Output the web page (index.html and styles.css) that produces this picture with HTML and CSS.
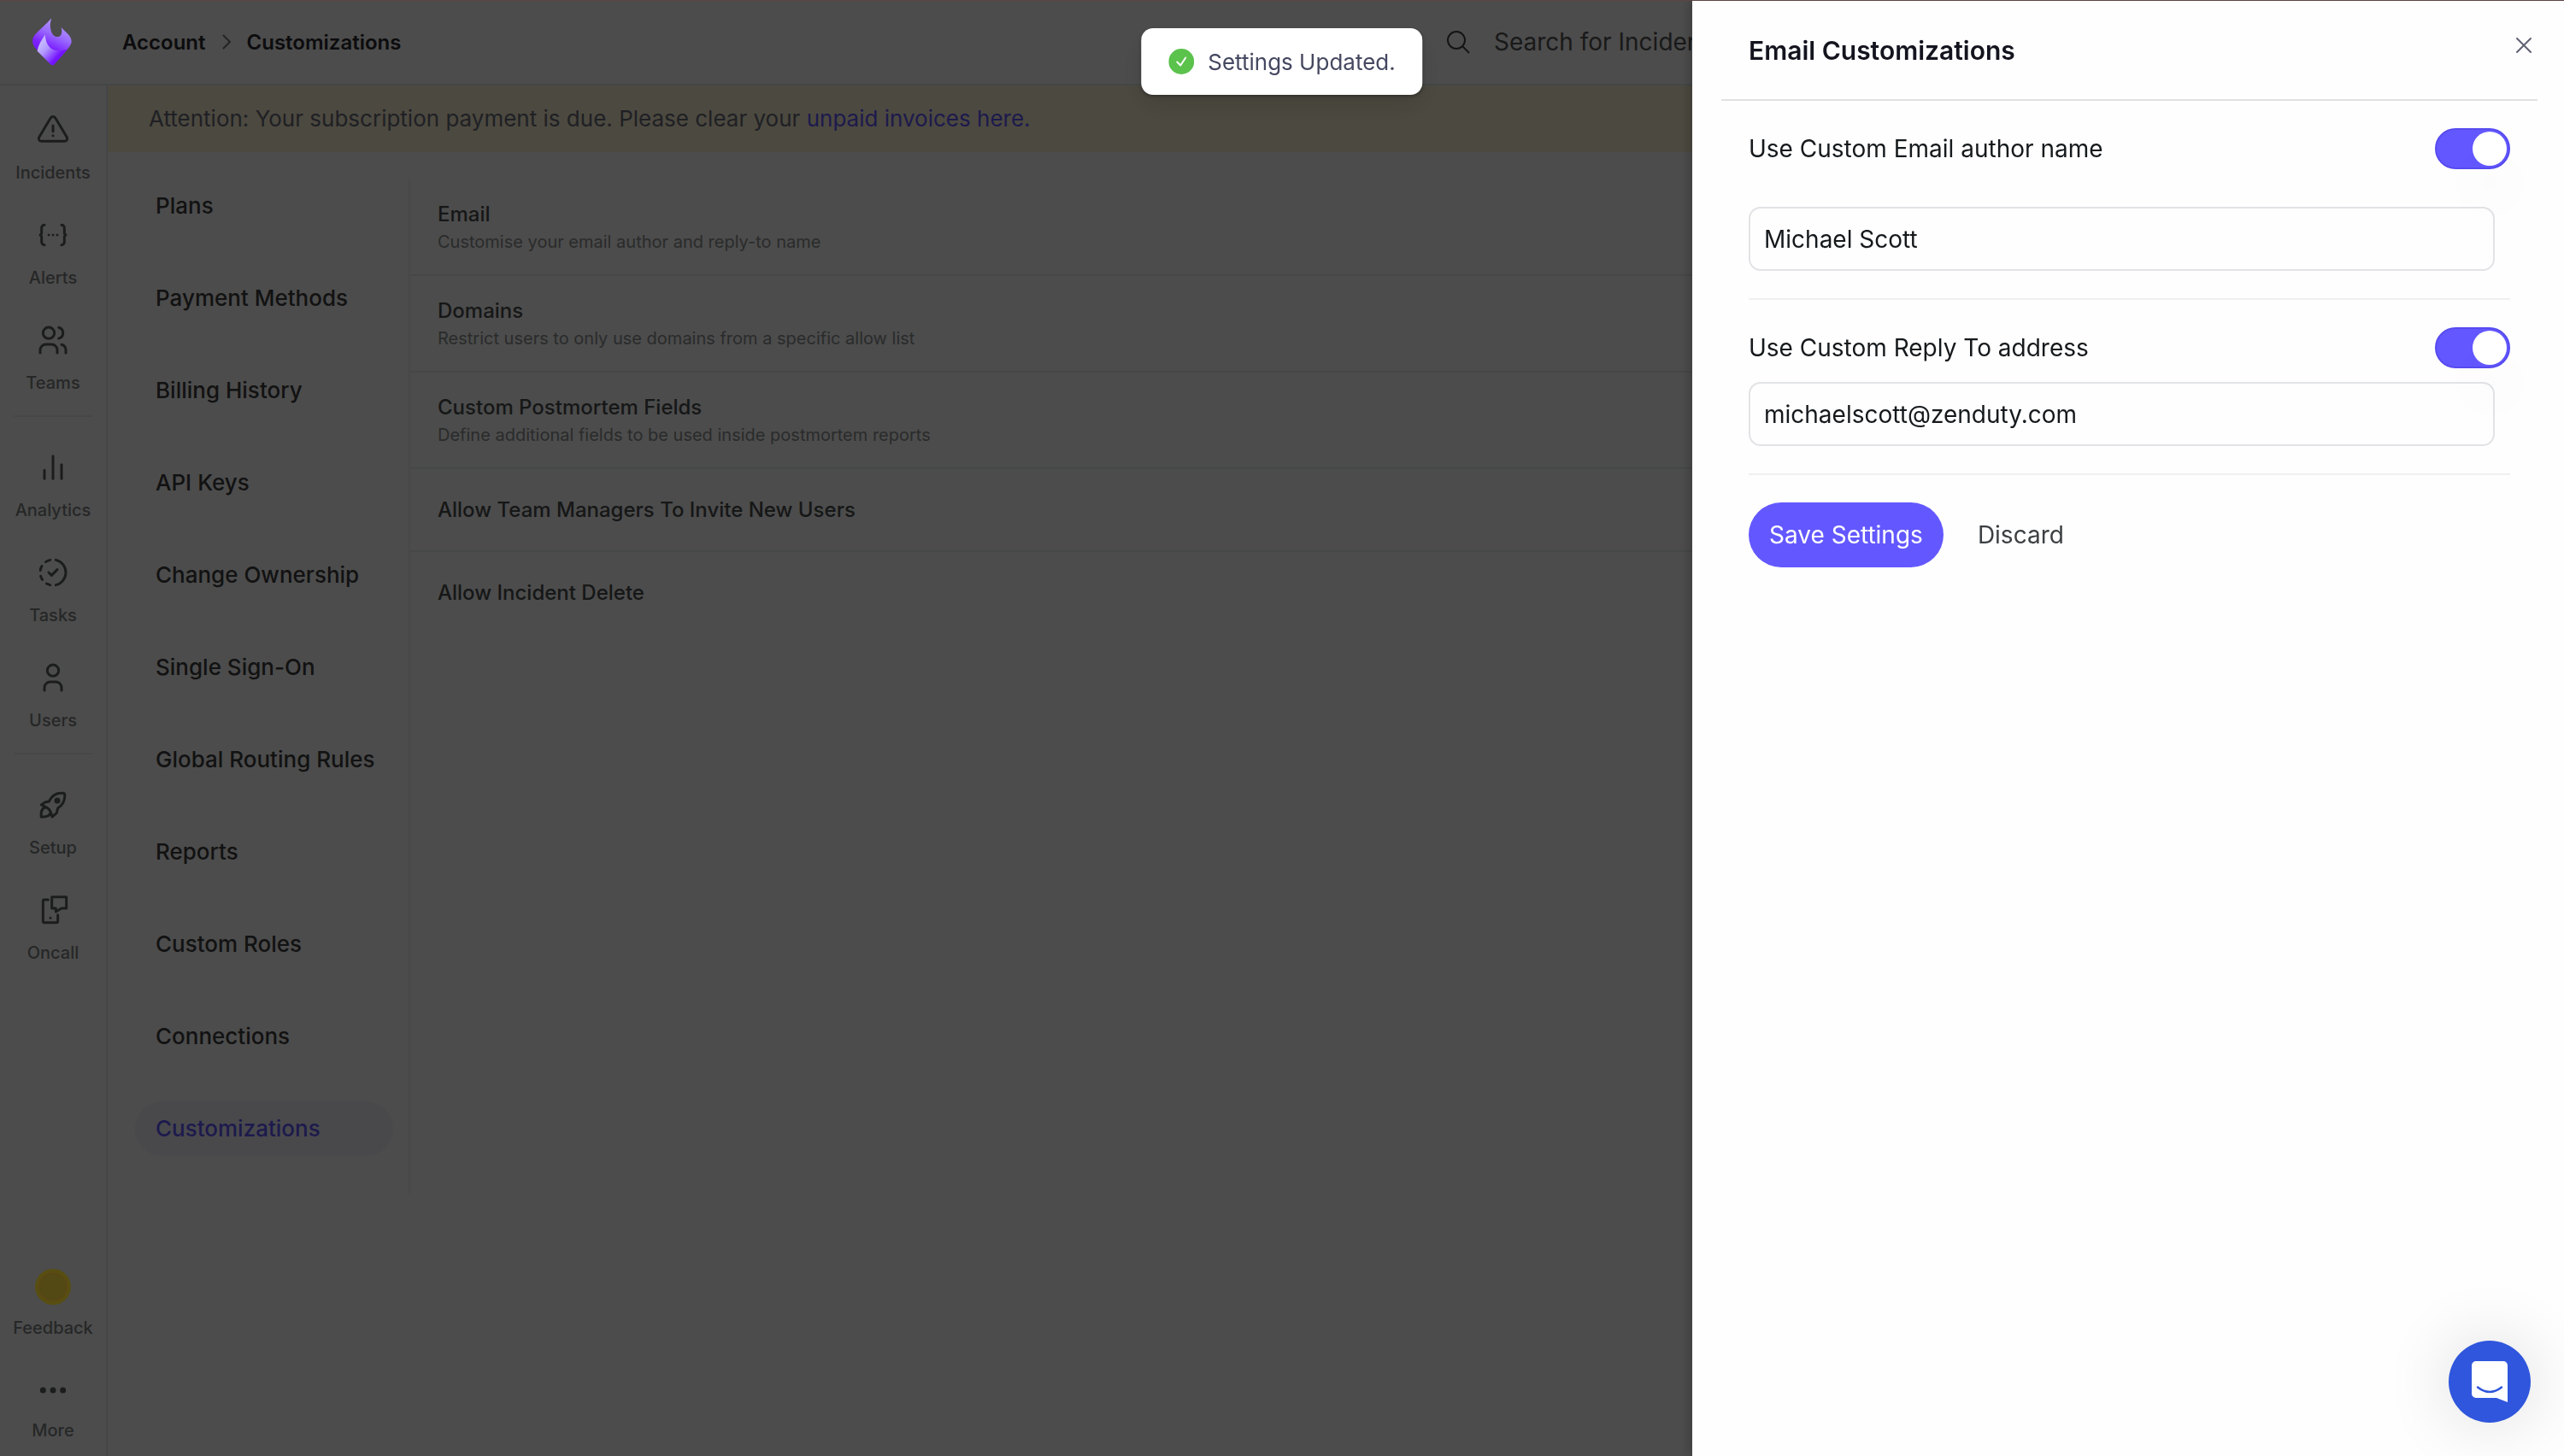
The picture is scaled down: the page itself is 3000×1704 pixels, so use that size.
FILE: index.html
```html
<!DOCTYPE html>
<html lang="en">
<head>
  <meta charset="UTF-8">
  <meta name="viewport" content="width=device-width, initial-scale=1.0">
  <title>Account - Customizations</title>
  <link rel="stylesheet" href="styles.css">
</head>
<body>
  <!-- Top Bar -->
  <header class="topbar">
    <a href="#" class="logo" aria-label="Home">
      <svg viewBox="110 60 146 174" width="48" height="58">
        <defs>
          <linearGradient id="flameOuter" x1="0.7" y1="0" x2="0.3" y2="1">
            <stop offset="0" stop-color="#b9a4ff"/>
            <stop offset="0.35" stop-color="#9a6cff"/>
            <stop offset="0.62" stop-color="#7c22ff"/>
            <stop offset="1" stop-color="#6a10f5"/>
          </linearGradient>
          <linearGradient id="flameInner" x1="0.1" y1="0.35" x2="0.6" y2="0.8">
            <stop offset="0" stop-color="#c3b5ff"/>
            <stop offset="0.35" stop-color="#b199ff"/>
            <stop offset="1" stop-color="#7413ff"/>
          </linearGradient>
        </defs>
        <path fill="url(#flameOuter)" d="M180 63C178 76 174 84 178 103C181 119 190 129 201 129C216 129 221 113 215 95C229 109 240 118 246 127C254 139 254 151 246 162C232 181 209 206 191 226Q184 234 177 226C160 208 138 188 124 170C110 152 110 136 122 121C138 102 163 84 180 63Z"/>
        <path fill="url(#flameInner)" d="M158 122C144 142 134 158 130 180L177 226Q184 234 191 226L238 173C222 181 196 180 182 172C168 163 160 148 158 122Z"/>
      </svg>
    </a>
    <nav class="breadcrumb">
      <a href="#">Account</a>
      <svg viewBox="0 0 12 20" width="12" height="20"><path d="M2 2l8 8-8 8" fill="none" stroke="#777" stroke-width="2"/></svg>
      <a href="#">Customizations</a>
    </nav>
    <div class="search">
      <svg viewBox="0 0 28 28" width="28" height="28" fill="none" stroke="#444" stroke-width="2"><circle cx="12" cy="12" r="10"/><path d="M19 19l8 8"/></svg>
      <input type="text" placeholder="Search for Incidents" aria-label="Search">
    </div>
  </header>

  <div class="layout">
    <!-- Sidebar -->
    <aside class="sidebar">
      <div class="side-group">
        <a href="#" class="side-item">
          <svg class="icon" viewBox="0 0 24 24"><path d="M12 9v4M10.363 3.591l-8.106 13.534a1.914 1.914 0 0 0 1.636 2.871h16.214a1.914 1.914 0 0 0 1.636-2.87l-8.106-13.536a1.914 1.914 0 0 0-3.274 0zM12 16h.01"/></svg>
          <span>Incidents</span>
        </a>
        <a href="#" class="side-item">
          <svg class="icon" viewBox="0 0 24 24"><path d="M15 12h.01M12 12h.01M9 12h.01M6 19a2 2 0 0 1-2-2v-4l-1-1 1-1V7a2 2 0 0 1 2-2M18 19a2 2 0 0 0 2-2v-4l1-1-1-1V7a2 2 0 0 0-2-2"/></svg>
          <span>Alerts</span>
        </a>
        <a href="#" class="side-item">
          <svg class="icon" viewBox="0 0 24 24"><path d="M5 7a4 4 0 1 0 8 0a4 4 0 1 0-8 0M3 21v-2a4 4 0 0 1 4-4h4a4 4 0 0 1 4 4v2M16 3.13a4 4 0 0 1 0 7.75M21 21v-2a4 4 0 0 0-3-3.85"/></svg>
          <span>Teams</span>
        </a>
      </div>
      <div class="side-group">
        <a href="#" class="side-item">
          <svg class="icon" viewBox="0 0 24 24"><path d="M6 20v-6M12 20V4M18 20V10"/></svg>
          <span>Analytics</span>
        </a>
        <a href="#" class="side-item">
          <svg class="icon" viewBox="0 0 24 24"><path d="M10 20.777a8.942 8.942 0 0 1-2.48-.969M14 3.223a9.003 9.003 0 0 1 0 17.554M4.579 17.093a8.961 8.961 0 0 1-1.227-2.592M3.124 10.5c.16-.95.468-1.85.9-2.675l.169-.305M6.907 4.579a8.954 8.954 0 0 1 3.093-1.356M9 12l2 2l4-4"/></svg>
          <span>Tasks</span>
        </a>
        <a href="#" class="side-item">
          <svg class="icon" viewBox="0 0 24 24"><path d="M8 7a4 4 0 1 0 8 0a4 4 0 0 0-8 0M6 21v-2a4 4 0 0 1 4-4h4a4 4 0 0 1 4 4v2"/></svg>
          <span>Users</span>
        </a>
      </div>
      <div class="side-group">
        <a href="#" class="side-item">
          <svg class="icon" viewBox="0 0 24 24"><path d="M3.8 12L6.6 10L9.2 9.6C11 6 13.6 4 17 3.8H19Q20.3 3.8 20.3 5C20.4 8.5 19 12 15.4 14.3L14.6 17.6L11.4 20.4L10.4 17Q9.3 14.6 7.2 13.6ZM7.2 13.6C4.8 13.8 3.4 16 3.7 20.4C6.5 20.6 9.8 20.4 10.4 17"/><circle cx="15" cy="9" r="1.2" class="dot"/></svg>
          <span>Setup</span>
        </a>
        <a href="#" class="side-item">
          <svg class="icon" viewBox="0 0 24 24"><path d="M8.6 4.8H5.8Q5 4.8 5 5.6V20Q5 20.8 5.8 20.8H14.6Q15.4 20.8 15.4 20V15.4M10.2 17.6h.01M11.2 2.8H21.4V10.8H18L14 13.2V10.8H11.2Z"/></svg>
          <span>Oncall</span>
        </a>
      </div>
      <div class="side-group side-bottom">
        <a href="#" class="side-item">
          <svg class="coin" viewBox="0 0 42 42"><circle cx="21" cy="21" r="21" fill="#584e11"/><circle cx="21" cy="21" r="16" fill="#524914" stroke="#5a4616" stroke-width="1.5"/></svg>
          <span>Feedback</span>
        </a>
        <a href="#" class="side-item">
          <svg class="icon" viewBox="0 0 24 24"><g class="dot"><circle cx="5" cy="12" r="1.2"/><circle cx="12" cy="12" r="1.2"/><circle cx="19" cy="12" r="1.2"/></g></svg>
          <span>More</span>
        </a>
      </div>
    </aside>

    <main class="main">
      <p class="banner">Attention: Your subscription payment is due. Please clear your <a href="#">unpaid invoices here.</a></p>
      <div class="content">
        <!-- Account Menu -->
        <nav class="menu">
          <a href="#">Plans</a>
          <a href="#">Payment Methods</a>
          <a href="#">Billing History</a>
          <a href="#">API Keys</a>
          <a href="#">Change Ownership</a>
          <a href="#">Single Sign-On</a>
          <a href="#">Global Routing Rules</a>
          <a href="#">Reports</a>
          <a href="#">Custom Roles</a>
          <a href="#">Connections</a>
          <a href="#" class="active">Customizations</a>
        </nav>

        <!-- Settings List -->
        <section class="settings">
          <div class="setting">
            <h3>Email</h3>
            <p>Customise your email author and reply-to name</p>
          </div>
          <div class="setting">
            <h3>Domains</h3>
            <p>Restrict users to only use domains from a specific allow list</p>
          </div>
          <div class="setting">
            <h3>Custom Postmortem Fields</h3>
            <p>Define additional fields to be used inside postmortem reports</p>
          </div>
          <div class="setting single">
            <h3>Allow Team Managers To Invite New Users</h3>
          </div>
          <div class="setting single">
            <h3>Allow Incident Delete</h3>
          </div>
        </section>
      </div>
    </main>
  </div>

  <div class="overlay"></div>

  <!-- Drawer -->
  <form class="drawer">
    <div class="drawer-header">
      <h2>Email Customizations</h2>
      <button type="button" class="close" aria-label="Close">
        <svg viewBox="0 0 20 20" width="20" height="20"><path d="M2 2l16 16M18 2L2 18" fill="none" stroke="#5f6173" stroke-width="2" stroke-linecap="round"/></svg>
      </button>
    </div>
    <div class="drawer-body">
      <div class="field">
        <div class="field-row">
          <label for="use-author">Use Custom Email author name</label>
          <input type="checkbox" class="toggle" id="use-author" checked>
        </div>
        <input type="text" class="text-input" value="Michael Scott" aria-label="Email author name">
      </div>
      <div class="field compact">
        <div class="field-row">
          <label for="use-reply">Use Custom Reply To address</label>
          <input type="checkbox" class="toggle" id="use-reply" checked>
        </div>
        <input type="text" class="text-input" value="michaelscott@zenduty.com" aria-label="Reply to address">
      </div>
      <div class="actions">
        <button type="button" class="btn btn-primary">Save Settings</button>
        <button type="button" class="btn btn-text">Discard</button>
      </div>
    </div>
  </form>

  <!-- Toast -->
  <div class="toast" role="status">
    <svg viewBox="0 0 30 30" width="30" height="30"><circle cx="15" cy="15" r="15" fill="#5bc24c"/><path d="M10 15.5l4 4 6-9" fill="none" stroke="#fff" stroke-width="2" stroke-linecap="round" stroke-linejoin="round"/></svg>
    <span>Settings Updated.</span>
  </div>

  <!-- Chat Launcher -->
  <button type="button" class="chat" aria-label="Open chat">
    <svg viewBox="0 0 42 48" width="42" height="48"><path fill="#fff" d="M5 0h32a5 5 0 0 1 5 5v43l-13-5H5a5 5 0 0 1-5-5V5a5 5 0 0 1 5-5z"/><path d="M7 30.5q14 11 28 0" fill="none" stroke="#2f56dc" stroke-width="2.5" stroke-linecap="round"/></svg>
  </button>
</body>
</html>
```
FILE: styles.css
```css
/* Reset & Base */
* {
  box-sizing: border-box;
  margin: 0;
  padding: 0;
}

body {
  font-family: Inter, "Liberation Sans", sans-serif;
  font-size: 28px;
  background: #fff;
  color: #333;
  min-height: 100vh;
  display: flex;
  flex-direction: column;
}

/* Thin strip over everything */
body::before {
  content: '';
  position: fixed;
  top: 0;
  left: 0;
  right: 0;
  height: 1px;
  background: #5f4343;
  z-index: 40;
}

a {
  color: inherit;
  text-decoration: none;
}

button {
  font-family: inherit;
  cursor: pointer;
}

input {
  font-family: inherit;
  font-size: 28px;
}

/* Top Bar */
.topbar {
  height: 100px;
  display: flex;
  align-items: center;
  border-bottom: 2px solid #e4ecee;
}

.logo {
  width: 122px;
  height: 58px;
  display: flex;
  justify-content: center;
  position: relative;
  z-index: 15;
}

.breadcrumb {
  display: flex;
  align-items: center;
  gap: 18px;
  margin-left: 21px;
  font-size: 24px;
  font-weight: 600;
  color: #2b2b2f;
}

.search {
  display: flex;
  align-items: center;
  gap: 28px;
  width: 44%;
  margin-left: auto;
  padding-left: 12px;
}

.search input {
  flex: 1;
  border: none;
  outline: none;
  background: none;
}

.search input::placeholder {
  color: #555;
}

/* Layout */
.layout {
  flex: 1;
  display: flex;
}

/* Sidebar */
.sidebar {
  width: 126px;
  padding: 32px 16px 18px;
  border-right: 2px solid #e4ecee;
  display: flex;
  flex-direction: column;
}

.side-group {
  display: flex;
  flex-direction: column;
  align-items: center;
  gap: 41px;
  padding-bottom: 26px;
}

.side-group + .side-group {
  border-top: 2px solid #eaeded;
  padding-top: 39px;
}

.side-item {
  display: flex;
  flex-direction: column;
  align-items: center;
  gap: 18px;
  font-size: 20px;
  font-weight: 500;
  line-height: 24px;
  color: #808484;
}

.icon {
  width: 40px;
  height: 40px;
  fill: none;
  stroke: #5c6060;
  stroke-width: 1.8;
  stroke-linecap: round;
  stroke-linejoin: round;
}

.dot {
  fill: #5c6060;
}

.side-group.side-bottom {
  margin-top: auto;
  padding: 0;
  border: none;
}

.side-bottom .side-item {
  gap: 15px;
}

.coin {
  width: 42px;
  height: 42px;
  position: relative;
  z-index: 15;
}

/* Main */
.main {
  flex: 1;
  min-width: 0;
}

.banner {
  padding: 20px 48px;
  background: #fff5d6;
  color: #6a6d78;
  font-size: 26px;
  line-height: 38px;
}

.banner a {
  color: #6358ff;
}

.content {
  display: flex;
  align-items: flex-start;
  padding-top: 31px;
}

/* Account Menu */
.menu {
  display: flex;
  flex-direction: column;
  gap: 44px;
  width: 354px;
  padding: 0 18px 44px 32px;
  border-right: 2px solid #f2f2f2;
}

.menu a {
  padding: 16px 24px;
  border-radius: 32px;
  font-size: 26px;
  font-weight: 500;
  line-height: 32px;
  white-space: nowrap;
  color: #3c3c3c;
}

.menu a.active {
  background: #f5f5ff;
  color: #6358ff;
}

/* Settings List */
.settings {
  flex: 1;
  padding-top: 1px;
}

.setting {
  padding: 25px 32px 24px;
  border-bottom: 2px solid #eaeded;
}

.setting:last-child {
  border-bottom: none;
}

.setting.single {
  padding: 32px 32px 31px;
}

.setting h3 {
  font-size: 24px;
  font-weight: 500;
  line-height: 32px;
  color: #4a4d4d;
}

.setting p {
  margin-top: 2px;
  font-size: 20px;
  line-height: 28px;
  color: #8c9090;
}

/* Overlay */
.overlay {
  position: fixed;
  top: 0;
  left: 0;
  right: 0;
  bottom: 0;
  background: rgba(0, 0, 0, 0.7);
  z-index: 10;
}

/* Drawer */
.drawer {
  position: fixed;
  top: 0;
  right: 0;
  bottom: 0;
  width: 34%;
  background: #fefefe;
  box-shadow: -4px 0 12px rgba(0, 0, 0, 0.2);
  z-index: 20;
}

.drawer-header {
  display: flex;
  justify-content: space-between;
  margin: 0 31px 0 34px;
  padding: 38px 0 36px 32px;
  border-bottom: 2px solid #e0e1e3;
}

.drawer-header h2 {
  font-size: 30px;
  font-weight: 600;
  line-height: 42px;
  color: #14141f;
}

.close {
  width: 32px;
  height: 32px;
  border: none;
  background: none;
}

.drawer-body {
  padding: 32px 63px 32px 66px;
}

.field {
  padding-bottom: 32px;
  margin-bottom: 32px;
  border-bottom: 2px solid #eff0f0;
}

.field-row {
  display: flex;
  justify-content: space-between;
  align-items: center;
  margin-bottom: 44px;
  color: #15191c;
}

.compact .field-row {
  margin-bottom: 16px;
}

.text-input {
  display: block;
  width: calc(100% - 18px);
  height: 75px;
  padding: 0 16px;
  border: 2px solid #e2e3e6;
  border-radius: 14px;
  background: transparent;
  color: #15191c;
}

.toggle {
  appearance: none;
  display: flex;
  width: 88px;
  height: 48px;
  padding: 2px;
  border: 2px solid #574bf0;
  border-radius: 24px;
  background: #6358ff;
  cursor: pointer;
}

.toggle::before {
  content: '';
  width: 40px;
  height: 40px;
  margin-left: auto;
  border-radius: 50%;
  background: #fff;
  box-shadow: 0 40px 60px rgba(0, 0, 0, 0.04);
}

.actions {
  display: flex;
  gap: 16px;
}

.btn {
  height: 76px;
  padding: 0 24px;
  border: none;
  border-radius: 38px;
  font-size: 28px;
}

.btn-primary {
  background: #6358ff;
  color: #fff;
}

.btn-text {
  background: none;
  color: #3c4043;
}

/* Toast */
.toast {
  position: fixed;
  top: 33px;
  left: 50%;
  transform: translateX(-50%);
  display: flex;
  align-items: center;
  gap: 16px;
  height: 78px;
  padding: 0 32px;
  border-radius: 14px;
  background: #fff;
  color: #454860;
  font-size: 26px;
  box-shadow: 0 12px 32px rgba(0, 0, 0, 0.12), 0 2px 4px rgba(0, 0, 0, 0.3);
  z-index: 30;
}

/* Chat Launcher */
.chat {
  position: fixed;
  right: 39px;
  bottom: 39px;
  width: 96px;
  height: 96px;
  display: flex;
  justify-content: center;
  align-items: center;
  border: none;
  border-radius: 50%;
  background: #2f56dc;
  box-shadow: 0 0 80px rgba(0, 0, 0, 0.14);
  z-index: 30;
}
```
